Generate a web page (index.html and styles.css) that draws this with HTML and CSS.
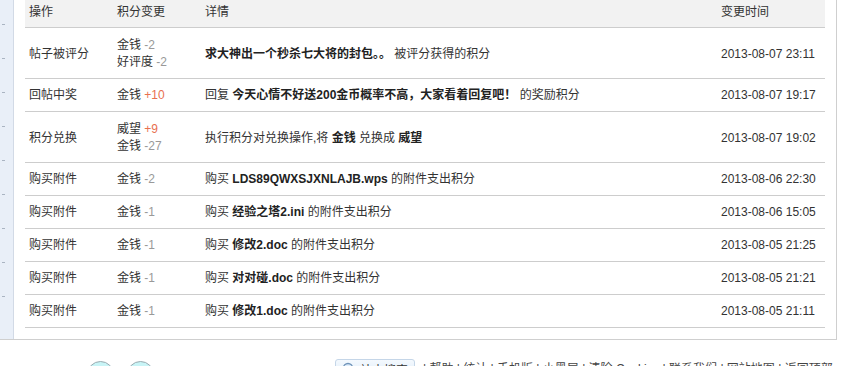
FILE: index.html
```html
<!DOCTYPE html>
<html>
<head>
<meta charset="utf-8">
<link rel="stylesheet" href="styles.css">
</head>
<body>
<div class="wrap">
  <div class="side">
    <span class="dash"></span><span class="dash"></span><span class="dash"></span><span class="dash"></span><span class="dash"></span><span class="dash"></span><span class="dash"></span><span class="dash"></span><span class="dash"></span>
  </div>
  <div class="main">
    <table class="log">
      <colgroup><col class="c1"><col class="c2"><col class="c3"><col class="c4"></colgroup>
      <thead>
        <tr><th>操作</th><th>积分变更</th><th>详情</th><th>变更时间</th></tr>
      </thead>
      <tbody>
        <tr class="tall"><td>帖子被评分</td><td>金钱 <span class="minus">-2</span><br>好评度 <span class="minus">-2</span></td><td><b>求大神出一个秒杀七大将的封包。。</b> 被评分获得的积分</td><td class="time">2013-08-07 23:11</td></tr>
        <tr><td>回帖中奖</td><td>金钱 <span class="plus">+10</span></td><td>回复 <b>今天心情不好送200金币概率不高，大家看着回复吧！</b> 的奖励积分</td><td class="time">2013-08-07 19:17</td></tr>
        <tr class="tall"><td>积分兑换</td><td>威望 <span class="plus">+9</span><br>金钱 <span class="minus">-27</span></td><td>执行积分对兑换操作,将 <b>金钱</b> 兑换成 <b>威望</b></td><td class="time">2013-08-07 19:02</td></tr>
        <tr><td>购买附件</td><td>金钱 <span class="minus">-2</span></td><td>购买 <b>LDS89QWXSJXNLAJB.wps</b> 的附件支出积分</td><td class="time">2013-08-06 22:30</td></tr>
        <tr><td>购买附件</td><td>金钱 <span class="minus">-1</span></td><td>购买 <b>经验之塔2.ini</b> 的附件支出积分</td><td class="time">2013-08-06 15:05</td></tr>
        <tr><td>购买附件</td><td>金钱 <span class="minus">-1</span></td><td>购买 <b>修改2.doc</b> 的附件支出积分</td><td class="time">2013-08-05 21:25</td></tr>
        <tr><td>购买附件</td><td>金钱 <span class="minus">-1</span></td><td>购买 <b>对对碰.doc</b> 的附件支出积分</td><td class="time">2013-08-05 21:21</td></tr>
        <tr><td>购买附件</td><td>金钱 <span class="minus">-1</span></td><td>购买 <b>修改1.doc</b> 的附件支出积分</td><td class="time">2013-08-05 21:11</td></tr>
      </tbody>
    </table>
  </div>
</div>
<div class="footer">
  <span class="circle"></span><span class="circle"></span>
  <span class="search"><svg width="14" height="14" viewBox="0 0 14 14"><circle cx="6" cy="6" r="4.5" fill="#dfeefb" stroke="#6f93b8" stroke-width="1.4"/><line x1="9.3" y1="9.3" x2="13" y2="13" stroke="#6f93b8" stroke-width="2"/></svg>站内搜索</span>
  <span class="links">| 帮助 | 统计 | 手机版 | 小黑屋 | 清除 Cookies | 联系我们 | 网站地图 | 返回顶部</span>
</div>
</body>
</html>
```
FILE: styles.css
```css
body {
  margin: 0;
  font-family: "Liberation Sans", "Noto Sans CJK SC", sans-serif;
  font-size: 12px;
  color: #333;
  background: #fff;
  overflow: hidden;
}
.wrap {
  display: flex;
  width: 837px;
  border-bottom: 1px solid #cfcfcf;
}
.side {
  width: 14px;
  background: #e9eff8;
  border-right: 1px solid #d2dae6;
  display: flex;
  flex-direction: column;
  padding-top: 24px;
  gap: 33px;
  box-sizing: border-box;
}
.dash {
  display: block;
  width: 3px;
  height: 1px;
  margin-left: 2px;
  background: #aab4c2;
}
.main {
  flex: 1;
  border-right: 1px solid #cfcfcf;
  padding: 0 9px 11px 11px;
}
.log {
  width: 800px;
  border-collapse: collapse;
  table-layout: fixed;
}
.c1 { width: 88px; }
.c2 { width: 88px; }
.c3 { width: 516px; }
.c4 { width: 108px; }
.log th {
  background: #f2f2f2;
  font-weight: normal;
  text-align: left;
  padding: 4px 4px 6px;
  line-height: 17px;
  border-bottom: 1px solid #cdcdcd;
}
.log td {
  padding: 8px 4px 7px;
  line-height: 17px;
  border-bottom: 1px solid #cdcdcd;
  white-space: nowrap;
  vertical-align: middle;
}
.log .tall td { padding-top: 9px; }
.log b { color: #222; }
.minus { color: #999; }
.plus { color: #e8704f; }
.footer {
  display: flex;
  align-items: flex-start;
  height: 27px;
  padding-top: 21px;
  box-sizing: border-box;
}
.circle {
  width: 25px;
  height: 25px;
  border-radius: 50%;
  border: 1px solid #9aaab0;
  background: #c8f4f6;
  margin-left: 13px;
  flex: none;
}
.circle:first-child { margin-left: 87px; }
.search {
  margin-left: 181px;
  margin-top: -2px;
  width: 80px;
  height: 20px;
  box-sizing: border-box;
  border: 1px solid #c5d6e8;
  border-radius: 3px;
  background: linear-gradient(#f4f9fe, #dcebf8);
  display: flex;
  align-items: center;
  gap: 4px;
  padding-left: 6px;
  color: #333;
}
.links {
  margin-left: 8px;
  color: #444;
  line-height: 17px;
}
```
